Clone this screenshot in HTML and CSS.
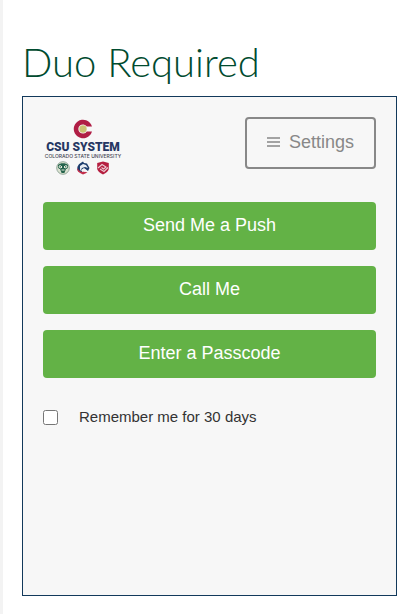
FILE: index.html
```html
<!DOCTYPE html>
<html lang="en">
<head>
<meta charset="utf-8">
<meta name="viewport" content="width=device-width, initial-scale=1">
<title>Duo Required</title>
<link rel="stylesheet" href="styles.css">
</head>
<body>
<main class="page">
  <h1 class="title">Duo Required</h1>
  <section class="frame">
    <header class="bar">
      <div class="logo">
        <svg class="logo-mark" viewBox="0 0 20 20" aria-hidden="true">
          <path d="M19 7.5A9.3 9.3 0 1 0 19 12.5H13.8A4.6 4.6 0 1 1 13.8 7.5Z" fill="#b01e45"/>
          <circle cx="10" cy="10" r="3.7" fill="#cbc273"/>
        </svg>
        <span class="logo-name">CSU SYSTEM</span>
        <span class="logo-sub">COLORADO STATE UNIVERSITY</span>
        <div class="seals">
          <svg class="seal" viewBox="0 0 14 14" aria-hidden="true">
            <circle cx="7" cy="7" r="6.3" fill="#dce3d2" stroke="#7d9788" stroke-width=".8"/>
            <path d="M2 4C4 1.7 10 1.7 12 4C12.5 6 11.5 8 10 8L8.4 12H5.6L4 8C2.5 8 1.5 6 2 4Z" fill="#24634c"/>
            <path d="M3 5Q5 4 6 6L5 7Q3 7 3 5M11 5Q9 4 8 6L9 7Q11 7 11 5M5.5 9H8.5" fill="none" stroke="#e6eadc"/>
          </svg>
          <svg class="seal" viewBox="0 0 14 14" aria-hidden="true">
            <path d="M2 10A6 6 0 0 1 5 1.7L7 0.5L8 2L11 2.5L13.5 7L12 10L8 7L5 9L7 12Z" fill="#1d3d6d"/>
            <path d="M4 5L7 3L10 4L12 7L9 6L6 7L4 10Z" fill="#e9edf3"/>
            <path d="M1 7Q1 11 5 12.5L7 13.5L11.5 11.5L8 10.5L6 11Q3 10 1 7Z" fill="#c32e4b"/>
            <path d="M7 8L10 9L9 11L7 10Z" fill="#f5f5f7"/>
          </svg>
          <svg class="seal" viewBox="0 0 14 14" aria-hidden="true">
            <path d="M7 .5L12.8 2V8Q12 11 7 13.5Q2 11 1.2 8V2Z" fill="#b51e40"/>
            <path d="M2 7L6 3.5L10 6L7.5 8L5.5 6.5M12 6.5L8 10.5L4 8" fill="none" stroke="#edccd3" stroke-width="1.1"/>
          </svg>
        </div>
      </div>
      <button class="settings" type="button">
        <svg class="menu-icon" viewBox="0 0 13 10" aria-hidden="true">
          <path d="M0 1H13M0 5H13M0 9H13" stroke="currentColor" stroke-width="1.7"/>
        </svg>
        <span>Settings</span>
      </button>
    </header>
    <div class="actions">
      <button class="action" type="button">Send Me a Push</button>
      <button class="action" type="button">Call Me</button>
      <button class="action" type="button">Enter a Passcode</button>
    </div>
    <div class="remember">
      <input class="check" type="checkbox" id="remember">
      <label for="remember">Remember me for 30 days</label>
    </div>
  </section>
</main>
</body>
</html>
```
FILE: styles.css
```css
* {
  box-sizing: border-box;
}

body {
  margin: 0;
  background: #fff;
  font-family: "Liberation Sans", Arial, sans-serif;
}

.page {
  min-height: 100vh;
  padding: 36px 18px 18px 19px;
  border-left: 3px solid #f3f3f3;
}

.title {
  margin: 0 0 8px;
  color: #004b2f;
  font-family: Lato, sans-serif;
  font-size: 40px;
  font-weight: 300;
  line-height: 52px;
}

.frame {
  min-height: 500px;
  padding: 20px;
  border: 1px solid #12395b;
  background: #f7f7f7;
}

.bar {
  display: flex;
  justify-content: space-between;
  align-items: flex-start;
}

.logo {
  display: flex;
  flex-direction: column;
  align-items: center;
  width: 80px;
  height: 52px;
  padding-top: 2px;
  font-family: Inter, sans-serif;
  white-space: nowrap;
}

.logo-mark {
  flex: none;
  width: 20px;
  height: 20px;
}

.logo-name {
  margin-top: 2px;
  color: #263763;
  font-family: Roboto, sans-serif;
  font-size: 12px;
  font-weight: 900;
  line-height: 12px;
}

.logo-sub {
  color: #464653;
  font-size: 5px;
  font-weight: 500;
  line-height: 6px;
}

.seals {
  display: flex;
  gap: 6px;
  margin-top: 2px;
}

.seal {
  width: 14px;
  height: 14px;
}

.settings {
  display: flex;
  justify-content: center;
  align-items: center;
  gap: 9px;
  height: 52px;
  padding: 0 20px 2px;
  border: 2px solid #888;
  border-radius: 4px;
  background: transparent;
  color: #888;
  font-family: inherit;
  font-size: 18px;
}

.menu-icon {
  width: 13px;
  height: 10px;
}

.actions {
  display: grid;
  gap: 16px;
  margin-top: 33px;
}

.action {
  height: 48px;
  padding: 0 16px 2px;
  border: 0;
  border-radius: 4px;
  background: #63b246;
  color: #fff;
  font-family: inherit;
  font-size: 18px;
}

.remember {
  display: flex;
  align-items: center;
  gap: 21px;
  margin-top: 29px;
  color: #333;
  font-size: 15px;
  line-height: 20px;
}

.check {
  width: 15px;
  height: 15px;
  margin: 0;
}
```
